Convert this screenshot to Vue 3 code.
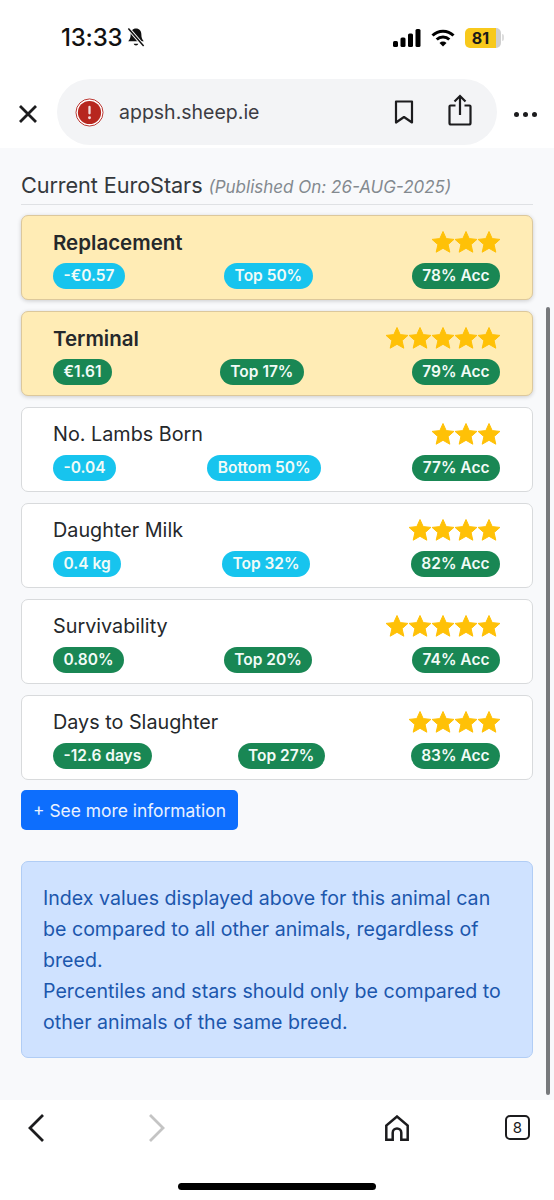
<script setup>
const rows = [
  { name: 'Replacement', stars: 3, hl: true, v: '-€0.57', vc: 'cyan', p: 'Top 50%', pc: 'cyan', a: '78% Acc' },
  { name: 'Terminal', stars: 5, hl: true, v: '€1.61', vc: 'green', p: 'Top 17%', pc: 'green', a: '79% Acc' },
  { name: 'No. Lambs Born', stars: 3, hl: false, v: '-0.04', vc: 'cyan', p: 'Bottom 50%', pc: 'cyan', a: '77% Acc' },
  { name: 'Daughter Milk', stars: 4, hl: false, v: '0.4 kg', vc: 'cyan', p: 'Top 32%', pc: 'cyan', a: '82% Acc' },
  { name: 'Survivability', stars: 5, hl: false, v: '0.80%', vc: 'green', p: 'Top 20%', pc: 'green', a: '74% Acc' },
  { name: 'Days to Slaughter', stars: 4, hl: false, v: '-12.6 days', vc: 'green', p: 'Top 27%', pc: 'green', a: '83% Acc' }
]
</script>

<template>
  <div class="phone">
    <header class="status">
      <div class="time-wrap">
        <span class="time">13:33</span>
        <svg class="bell" viewBox="0 0 20 22" width="20" height="21">
          <path d="M10 1.500c-3.600 0-5.600 2.700-5.600 6 0 4-1 5.600-2.600 7.500h16.400c-1.600-1.900-2.600-3.500-2.600-7.500 0-3.300-2-6-5.600-6z" fill="#111"/>
          <path d="M7.500 17.500a2.600 2.600 0 0 0 5 0z" fill="#111"/>
          <path d="M2 1.500 18 20" stroke="#fff" stroke-width="3.600"/>
          <path d="M2 1.500 18 20" stroke="#111" stroke-width="1.600"/>
        </svg>
      </div>
      <div class="sys">
        <svg viewBox="0 0 28 18" width="28" height="18">
          <rect x="0" y="12" width="5" height="6" rx="1.500" fill="#000"/>
          <rect x="7.500" y="8.500" width="5" height="9.500" rx="1.500" fill="#000"/>
          <rect x="15" y="4.500" width="5" height="13.500" rx="1.500" fill="#000"/>
          <rect x="22.500" y="0" width="5" height="18" rx="1.500" fill="#000"/>
        </svg>
        <svg viewBox="0 0 24 18" width="24" height="18">
          <path d="M1.500 6.500a15 15 0 0 1 21 0" fill="none" stroke="#000" stroke-width="3"/>
          <path d="M5.700 10.500a9 9 0 0 1 12.600 0" fill="none" stroke="#000" stroke-width="3"/>
          <path d="M8.500 14 12 17.500l3.500-3.500a5 5 0 0 0-7 0z" fill="#000"/>
        </svg>
        <div class="battery">
          <span class="bat-fill">81</span>
          <span class="bat-rest"></span>
          <span class="bat-cap"></span>
        </div>
      </div>
    </header>

    <div class="browser">
      <svg class="close" viewBox="0 0 20 20" width="20" height="20">
        <path d="M2 2 18 18M18 2 2 18" stroke="#1c1c1e" stroke-width="2.800" fill="none"/>
      </svg>
      <div class="url">
        <svg class="warn" viewBox="0 0 30 30" width="29" height="29">
          <circle cx="15" cy="15" r="14" fill="#fff" stroke="#b9302a" stroke-width="1"/>
          <circle cx="15" cy="15" r="12" fill="#b7271f"/>
          <rect x="13.800" y="8" width="2.400" height="9" rx="1.200" fill="#f3dcdc"/>
          <circle cx="15" cy="20.500" r="1.500" fill="#f3dcdc"/>
        </svg>
        <span class="host">appsh.sheep.ie</span>
        <svg class="bm" viewBox="0 0 20 24" width="20" height="24">
          <path d="M2 1.500h16v21L10 17l-8 5.500z" fill="none" stroke="#1c1c1e" stroke-width="2.200" stroke-linejoin="round"/>
        </svg>
        <svg class="share" viewBox="0 0 24 32" width="24" height="32">
          <path d="M7.500 11.500H2.500a1 1 0 0 0-1 1V29a1.500 1.500 0 0 0 1.500 1.500H21a1.500 1.500 0 0 0 1.500-1.500V12.500a1 1 0 0 0-1-1h-5" fill="none" stroke="#1c1c1e" stroke-width="2.200"/>
          <path d="M12 21V2.500M6.500 7.500 12 2l5.500 5.500" fill="none" stroke="#1c1c1e" stroke-width="2.200"/>
        </svg>
      </div>
      <div class="more"><i></i><i></i><i></i></div>
    </div>

    <main class="content">
      <h2 class="heading">Current EuroStars <small>(Published On: 26-AUG-2025)</small></h2>
      <div class="cards">
        <section v-for="r in rows" :key="r.name" class="card" :class="{ hl: r.hl }">
          <div class="top">
            <span class="name">{{ r.name }}</span>
            <span class="stars">
              <svg v-for="n in r.stars" :key="n" viewBox="0 0 24 24" width="24" height="24">
                <path d="M12 1.500 15.200 8.600 22.900 9.400 17.100 14.600 18.800 22.200 12 18.300 5.200 22.200 6.900 14.600 1.100 9.400 8.800 8.600z" fill="#ffc107" stroke="#ffc107" stroke-width="1" stroke-linejoin="round"/>
              </svg>
            </span>
          </div>
          <div class="badges">
            <span class="pill" :class="r.vc">{{ r.v }}</span>
            <span class="pill" :class="r.pc">{{ r.p }}</span>
            <span class="pill green">{{ r.a }}</span>
          </div>
        </section>
      </div>
      <button class="more-btn">+ See more information</button>
      <div class="alert">
        Index values displayed above for this animal can be compared to all other animals, regardless of breed.<br>
        Percentiles and stars should only be compared to other animals of the same breed.
      </div>
      <span class="scrollbar"></span>
    </main>

    <footer class="toolbar">
      <div class="tools">
        <svg class="t-back" viewBox="0 0 18 30" width="18" height="30"><path d="M16 2 3 15l13 13" fill="none" stroke="#1c1c1e" stroke-width="2.800"/></svg>
        <svg class="t-fwd" viewBox="0 0 18 30" width="18" height="30"><path d="M2 2l13 13L2 28" fill="none" stroke="#c4c4c4" stroke-width="2.800"/></svg>
        <svg class="t-home" viewBox="0 0 24 26" width="24" height="26"><path d="M1.300 24.700V10.500L12 1.500l10.700 9v14.200h-6.400v-7a4.300 4.300 0 0 0-8.600 0v7z" fill="none" stroke="#1c1c1e" stroke-width="2.500"/></svg>
        <div class="tabs">8</div>
      </div>
      <div class="home-bar"></div>
    </footer>
  </div>
</template>

<style scoped>
.phone {
  width: 554px;
  height: 1200px;
  display: flex;
  flex-direction: column;
  overflow: hidden;
  background: #fff;
  font-family: Inter, "Liberation Sans", sans-serif;
  color: #212529;
}
.status {
  height: 75px;
  flex: none;
  display: flex;
  justify-content: space-between;
  align-items: center;
  padding: 0 50px 0 61px;
  box-sizing: border-box;
}
.time-wrap { display: flex; align-items: center; gap: 4px; }
.time { font-size: 24px; font-weight: 500; color: #111; letter-spacing: -0.2px; }
.sys { display: flex; align-items: center; gap: 10px; }
.battery { display: flex; align-items: center; height: 20px; }
.bat-fill {
  width: 31px;
  height: 20px;
  background: #f8c91c;
  border-radius: 5px 0 0 5px;
  font-size: 16px;
  font-weight: 700;
  line-height: 20px;
  text-align: center;
  color: #1a1a1a;
}
.bat-rest { width: 5px; height: 20px; background: #cfcfcf; border-radius: 0 5px 5px 0; }
.bat-cap { width: 2px; height: 7px; background: #ddd; border-radius: 0 2px 2px 0; margin-left: 1px; }
.browser {
  height: 73px;
  flex: none;
  display: flex;
  align-items: flex-start;
  padding: 4px 0 0 18px;
  box-sizing: border-box;
}
.close { margin-top: 25px; flex: none; }
.url {
  width: 440px;
  height: 66px;
  margin-left: 19px;
  padding: 0 25px 0 18px;
  box-sizing: border-box;
  border-radius: 33px;
  background: #f3f4f6;
  display: flex;
  align-items: center;
}
.warn { flex: none; }
.host { margin-left: 15px; font-size: 19.500px; color: #3c3c43; flex: 1; }
.bm { flex: none; margin-right: 34px; }
.share { flex: none; margin-top: -4px; }
.more { display: flex; gap: 4px; margin: 33px 0 0 17px; }
.more i { width: 5px; height: 5px; border-radius: 50%; background: #1c1c1e; }
.content {
  position: relative;
  flex: 1;
  background: #f8f9fb;
  padding: 24px 21px 0;
  box-sizing: border-box;
}
.heading {
  margin: 0;
  height: 32px;
  border-bottom: 1px solid #dfe1e4;
  font-size: 21.700px;
  font-weight: 400;
  line-height: 27px;
  color: #34383c;
  letter-spacing: -0.1px;
  white-space: nowrap;
}
.heading small { font-size: 17px; font-style: italic; color: #83898f; letter-spacing: 0; }
.cards { margin-top: 10px; display: flex; flex-direction: column; gap: 11px; }
.card {
  height: 85px;
  box-sizing: border-box;
  padding: 8px 32px 0 31px;
  background: #fff;
  border: 1px solid #d8dadc;
  border-radius: 7px;
}
.card.hl {
  background: #ffecb5;
  border-color: #dcc89c;
  box-shadow: 0 1px 4px rgba(0, 0, 0, 0.18);
}
.top { height: 36px; display: flex; justify-content: space-between; align-items: center; }
.name { font-size: 19.800px; color: #25282b; }
.hl .name { font-size: 20.500px; font-weight: 600; }
.stars { display: flex; margin-right: -1px; }
.stars svg { margin-left: -1px; }
.badges { display: flex; justify-content: space-between; margin-top: 3px; }
.pill {
  height: 25.500px;
  line-height: 25px;
  padding: 0 10.500px;
  border-radius: 13px;
  font-size: 15.500px;
  font-weight: 600;
  color: #f2fbf7;
  white-space: nowrap;
}
.cyan { background: #17c4ee; }
.green { background: #198754; }
.more-btn {
  display: block;
  margin-top: 10px;
  width: 217px;
  height: 40px;
  padding: 0;
  border: 0;
  border-radius: 5px;
  background: #0d6efd;
  color: #eaf2ff;
  font-family: inherit;
  font-size: 17.400px;
}
.alert {
  margin-top: 31px;
  height: 197px;
  box-sizing: border-box;
  padding: 21px 21px 0;
  background: #cfe2ff;
  border: 1px solid #b1cdf5;
  border-radius: 7px;
  color: #1c57ad;
  font-size: 19.600px;
  line-height: 31px;
}
.scrollbar {
  position: absolute;
  left: 546px;
  top: 159px;
  width: 4px;
  height: 788px;
  border-radius: 2px;
  background: #77797c;
}
.toolbar { height: 100px; flex: none; background: #fff; }
.tools {
  height: 72px;
  display: flex;
  align-items: flex-start;
}
.t-back { margin: 13px 0 0 27px; }
.t-fwd { margin: 13px 0 0 103px; }
.t-home { margin: 15px 0 0 219px; }
.tabs {
  width: 21px;
  height: 21px;
  margin: 15px 0 0 96px;
  border: 2px solid #1c1c1e;
  border-radius: 5px;
  font-size: 15px;
  line-height: 21px;
  text-align: center;
  color: #1c1c1e;
}
.home-bar {
  width: 198px;
  height: 7px;
  margin: 11px auto 0;
  background: #000;
  border-radius: 4px;
}
</style>
